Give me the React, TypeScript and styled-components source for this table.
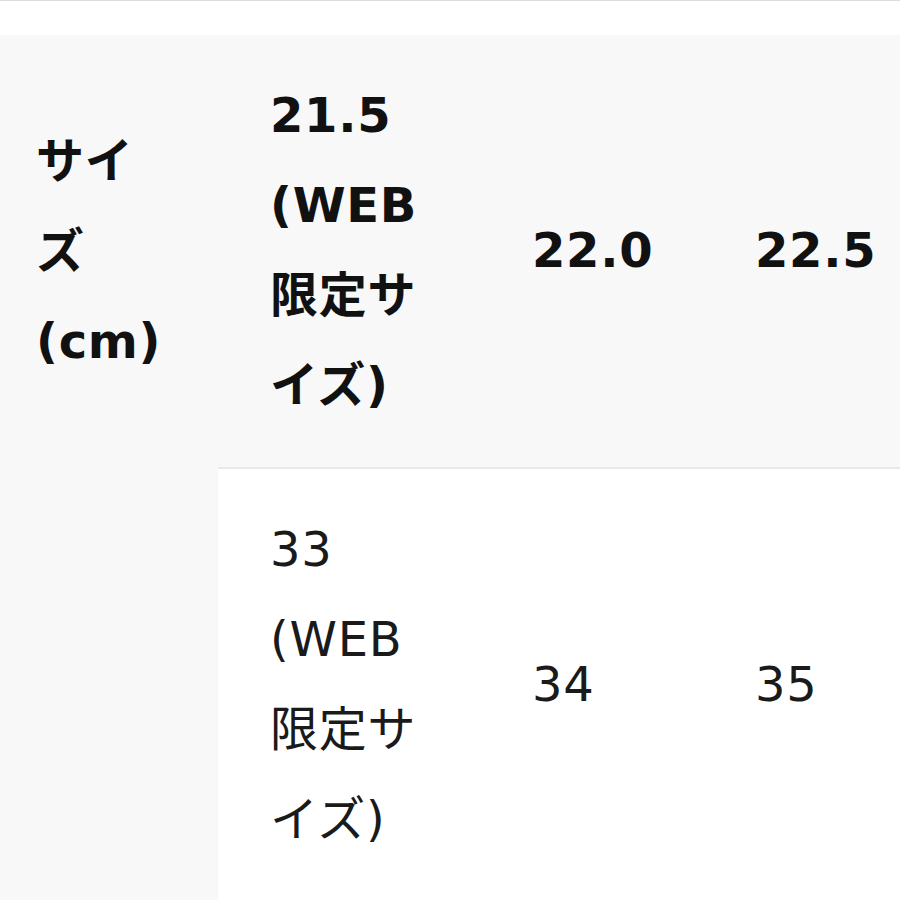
import React from 'react';
import styled, { createGlobalStyle } from 'styled-components';

const GlobalStyle = createGlobalStyle`
  html, body {
    margin: 0;
    padding: 0;
    background: #ffffff;
  }
  body {
    font-family: "DejaVu Sans", "Noto Sans CJK JP", sans-serif;
    color: #111;
  }
`;

const Page = styled.div`
  width: 900px;
  height: 900px;
  overflow: hidden;
  border-top: 1px solid #dcdcdc;
  box-sizing: border-box;
  padding-top: 34px;
`;

const SizeTable = styled.table`
  border-collapse: collapse;
  table-layout: fixed;
  width: 926px;
`;

const HeadCell = styled.th<{ $label?: boolean }>`
  background: #f8f8f8;
  text-align: left;
  vertical-align: middle;
  font-weight: 700;
  font-size: 48px;
  line-height: 90px;
  letter-spacing: 0.015em;
  color: #111;
  padding: 35px 0 37px ${(p) => (p.$label ? '36px' : '52px')};
`;

const BodyCell = styled.td<{ $blank?: boolean }>`
  background: ${(p) => (p.$blank ? '#f8f8f8' : '#ffffff')};
  border-top: ${(p) => (p.$blank ? 'none' : '2px solid #e8e8e8')};
  text-align: left;
  vertical-align: middle;
  font-weight: 400;
  font-size: 48px;
  line-height: 90px;
  letter-spacing: 0.015em;
  color: #1a1a1a;
  padding: 35px 0 36px 52px;
`;

const widths = [218, 262, 223, 223];

export default function App() {
  return (
    <>
      <GlobalStyle />
      <Page>
        <SizeTable>
          <colgroup>
            {widths.map((w, i) => (
              <col key={i} style={{ width: w }} />
            ))}
          </colgroup>
          <thead>
            <tr>
              <HeadCell $label>
                サイ<br />ズ<br />(cm)
              </HeadCell>
              <HeadCell>
                21.5<br />(WEB<br />限定サ<br />イズ)
              </HeadCell>
              <HeadCell>22.0</HeadCell>
              <HeadCell>22.5</HeadCell>
            </tr>
          </thead>
          <tbody>
            <tr>
              <BodyCell $blank />
              <BodyCell>
                33<br />(WEB<br />限定サ<br />イズ)
              </BodyCell>
              <BodyCell>34</BodyCell>
              <BodyCell>35</BodyCell>
            </tr>
          </tbody>
        </SizeTable>
      </Page>
    </>
  );
}
